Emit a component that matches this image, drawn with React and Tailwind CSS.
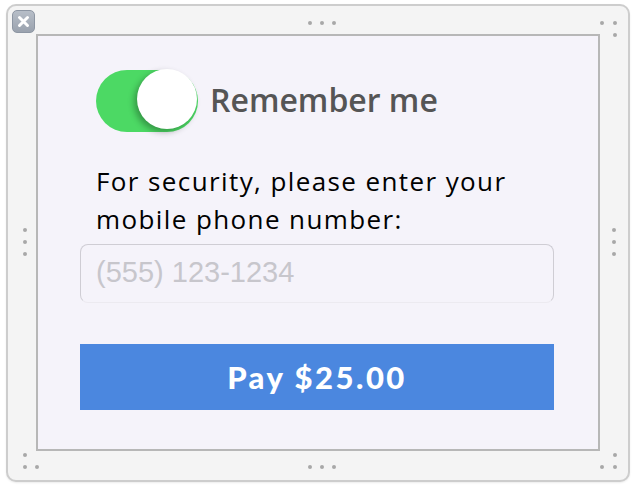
import { useState } from "react";

function Dot() {
  return <span className="block w-[4px] h-[4px] rounded-full bg-[#a8a8a8] blur-[0.5px]"></span>;
}

function Toggle({ on, onChange }) {
  return (
    <button
      type="button"
      onClick={() => onChange(!on)}
      className="relative w-[102px] h-[62px] shrink-0 rounded-full bg-[#4cd964] outline-none"
    >
      <span
        className={
          "absolute top-[-1px] w-[60px] h-[60px] rounded-full bg-white shadow-[-3px_3px_6px_rgba(0,0,0,0.3)] transition-all " +
          (on ? "left-[41px]" : "left-[1px]")
        }
      ></span>
    </button>
  );
}

export default function App() {
  const [remember, setRemember] = useState(true);
  const [phone, setPhone] = useState("");

  return (
    <div className="w-[638px] h-[490px] bg-white pt-[4px] pl-[6px]">
      <div className="relative w-[624px] h-[478px] rounded-[10px] border-2 border-[#cdcdcd] bg-[#f4f4f4] pt-[28px] pl-[28px] shadow-[0_1px_2px_rgba(0,0,0,0.08)]">
        {/* close button */}
        <div className="absolute left-[4px] top-[4px] w-[23px] h-[23px] rounded-[5px] border border-[#8d96a3] bg-gradient-to-b from-[#b7bec8] to-[#9aa2ae] flex items-center justify-center">
          <svg width="13" height="13" viewBox="0 0 13 13">
            <path d="M2.5 2.5l8 8M10.5 2.5l-8 8" stroke="white" strokeWidth="3" strokeLinecap="round" />
          </svg>
        </div>

        {/* resize handles */}
        <div className="absolute left-[300px] top-[15px] flex gap-[8px]">
          <Dot /><Dot /><Dot />
        </div>
        <div className="absolute left-[592px] top-[15px] flex flex-col items-end gap-[8px]">
          <div className="flex gap-[9px]"><Dot /><Dot /></div>
          <Dot />
        </div>
        <div className="absolute left-[15px] top-[222px] flex flex-col gap-[8px]">
          <Dot /><Dot /><Dot />
        </div>
        <div className="absolute left-[604px] top-[222px] flex flex-col gap-[8px]">
          <Dot /><Dot /><Dot />
        </div>
        <div className="absolute left-[15px] top-[447px] flex flex-col gap-[8px]">
          <Dot />
          <div className="flex gap-[8px]"><Dot /><Dot /></div>
        </div>
        <div className="absolute left-[300px] top-[459px] flex gap-[8px]">
          <Dot /><Dot /><Dot />
        </div>
        <div className="absolute left-[592px] top-[447px] flex flex-col items-end gap-[8px]">
          <Dot />
          <div className="flex gap-[9px]"><Dot /><Dot /></div>
        </div>

        {/* content panel */}
        <div className="w-[564px] h-[417px] border-2 border-[#b7b7b7] bg-[#f5f3fa] flex flex-col">
          <div className="flex items-center gap-[12px] ml-[58px] mt-[34px]">
            <Toggle on={remember} onChange={setRemember} />
            <span className="font-['Open_Sans',sans-serif] font-semibold text-[32px] text-[#555555] leading-none pb-[2px]">
              Remember me
            </span>
          </div>

          <p className="ml-[58px] mt-[30px] font-['Open_Sans',sans-serif] text-[26px] leading-[38px] tracking-[1.4px] text-black whitespace-nowrap">
            For security, please enter your
            <br />
            mobile phone number:
          </p>

          <input
            type="tel"
            value={phone}
            onChange={(e) => setPhone(e.target.value)}
            placeholder="(555) 123-1234"
            className="ml-[42px] mt-[6px] w-[474px] h-[59px] rounded-[8px] border border-[#cfcdd4] border-b-[#eceaf0] bg-transparent px-[15px] pb-[2px] font-['Liberation_Sans',sans-serif] text-[29px] text-black placeholder:text-[#c7c6cc] outline-none"
          />

          <button
            type="button"
            className="ml-[42px] mt-[41px] w-[474px] h-[66px] bg-[#4b87df] text-white font-['Lato',sans-serif] font-black text-[31px] tracking-[2.5px]"
          >
            Pay $25.00
          </button>
        </div>
      </div>
    </div>
  );
}
